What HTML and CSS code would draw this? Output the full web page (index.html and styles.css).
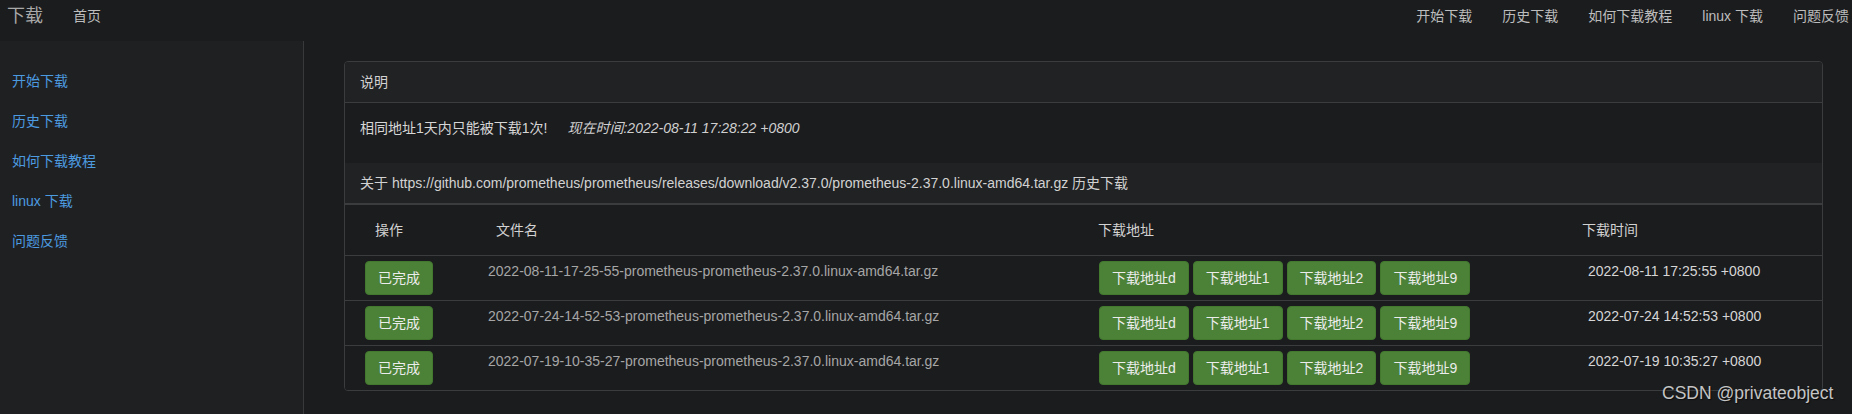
FILE: index.html
```html
<!DOCTYPE html>
<html lang="zh-CN">

<head>
    <meta charset="UTF-8">
    <meta name="viewport" content="width=device-width, initial-scale=1.0">
    <title>下载</title>
    <link rel="stylesheet" href="styles.css">
</head>

<body>
    <nav class="navbar">
        <a class="brand" href="#">下载</a>
        <a class="nav-link home" href="#">首页</a>
        <div class="nav-right">
            <a class="nav-link" href="#">开始下载</a>
            <a class="nav-link" href="#">历史下载</a>
            <a class="nav-link" href="#">如何下载教程</a>
            <a class="nav-link" href="#">linux 下载</a>
            <a class="nav-link" href="#">问题反馈</a>
        </div>
    </nav>

    <div class="layout">
        <aside class="sidebar">
            <a href="#">开始下载</a>
            <a href="#">历史下载</a>
            <a href="#">如何下载教程</a>
            <a href="#">linux 下载</a>
            <a href="#">问题反馈</a>
        </aside>

        <main class="main">
            <div class="panel">
                <div class="panel-heading">说明</div>
                <div class="panel-body">
                    <p>相同地址1天内只能被下载1次!<em class="now">现在时间:2022-08-11 17:28:22 +0800</em></p>
                </div>
                <div class="panel-sub">关于 https://github.com/prometheus/prometheus/releases/download/v2.37.0/prometheus-2.37.0.linux-amd64.tar.gz 历史下载</div>

                <table class="history">
                    <colgroup>
                        <col class="col-op">
                        <col class="col-name">
                        <col class="col-links">
                        <col class="col-time">
                    </colgroup>
                    <thead>
                        <tr>
                            <th class="c1">操作</th>
                            <th class="c2">文件名</th>
                            <th class="c3">下载地址</th>
                            <th class="c4">下载时间</th>
                        </tr>
                    </thead>
                    <tbody>
                        <tr>
                            <td class="c1"><button class="btn">已完成</button></td>
                            <td class="c2 filename">2022-08-11-17-25-55-prometheus-prometheus-2.37.0.linux-amd64.tar.gz</td>
                            <td class="c3">
                                <div class="links">
                                    <button class="btn">下载地址d</button>
                                    <button class="btn">下载地址1</button>
                                    <button class="btn">下载地址2</button>
                                    <button class="btn">下载地址9</button>
                                </div>
                            </td>
                            <td class="c4 time">2022-08-11 17:25:55 +0800</td>
                        </tr>
                        <tr>
                            <td class="c1"><button class="btn">已完成</button></td>
                            <td class="c2 filename">2022-07-24-14-52-53-prometheus-prometheus-2.37.0.linux-amd64.tar.gz</td>
                            <td class="c3">
                                <div class="links">
                                    <button class="btn">下载地址d</button>
                                    <button class="btn">下载地址1</button>
                                    <button class="btn">下载地址2</button>
                                    <button class="btn">下载地址9</button>
                                </div>
                            </td>
                            <td class="c4 time">2022-07-24 14:52:53 +0800</td>
                        </tr>
                        <tr>
                            <td class="c1"><button class="btn">已完成</button></td>
                            <td class="c2 filename">2022-07-19-10-35-27-prometheus-prometheus-2.37.0.linux-amd64.tar.gz</td>
                            <td class="c3">
                                <div class="links">
                                    <button class="btn">下载地址d</button>
                                    <button class="btn">下载地址1</button>
                                    <button class="btn">下载地址2</button>
                                    <button class="btn">下载地址9</button>
                                </div>
                            </td>
                            <td class="c4 time">2022-07-19 10:35:27 +0800</td>
                        </tr>
                    </tbody>
                </table>
            </div>
        </main>
    </div>

    <div class="watermark">CSDN @privateobject</div>
</body>

</html>
```

FILE: styles.css
```css
* {
    box-sizing: border-box;
    margin: 0;
    padding: 0;
}

body {
    font-family: 'Liberation Sans', 'Noto Sans CJK SC', sans-serif;
    font-size: 14px;
    line-height: 20px;
    background-color: #1b1c1e;
    color: #cfcfcf;
    min-height: 100vh;
    display: flex;
    flex-direction: column;
}

a {
    text-decoration: none;
}

.navbar {
    display: flex;
    align-items: flex-start;
    height: 41px;
    padding: 6px 3px 0 7px;
    background-color: #1b1c1e;
}

.brand {
    font-size: 18px;
    line-height: 20px;
    color: #a9a9a9;
}

.nav-link {
    color: #bdbdbd;
    line-height: 20px;
}

.home {
    margin-left: 30px;
}

.nav-right {
    margin-left: auto;
    display: flex;
    gap: 30px;
}

.layout {
    flex: 1;
    display: flex;
}

.sidebar {
    width: 304px;
    flex-shrink: 0;
    background-color: #1f2022;
    border-right: 1px solid #38393b;
    padding: 20px 12px;
    display: flex;
    flex-direction: column;
}

.sidebar a {
    color: #4c9be0;
    padding: 10px 0;
}

.main {
    flex: 1;
    padding: 20px 29px 20px 40px;
}

.panel {
    border: 1px solid #3b3c3e;
    border-radius: 4px;
    overflow: hidden;
}

.panel-heading {
    padding: 10px 15px;
    background-color: #212224;
    border-bottom: 1px solid #3b3c3e;
    color: #d2d2d2;
}

.panel-body {
    padding: 15px 15px;
    background-color: #1b1c1e;
}

.panel-body p {
    margin-bottom: 10px;
    color: #d6d6d6;
}

.now {
    margin-left: 20px;
    color: #cfcfcf;
}

.panel-sub {
    padding: 10px 15px;
    background-color: #212224;
    border-bottom: 2px solid #3b3c3e;
    color: #d2d2d2;
}

.history {
    width: 100%;
    table-layout: fixed;
    border-collapse: collapse;
    background-color: #1b1c1e;
}

.col-op {
    width: 135px;
}

.col-name {
    width: 610px;
}

.col-links {
    width: 484px;
}

.history th {
    text-align: left;
    font-weight: normal;
    color: #d2d2d2;
    padding-top: 15px;
    padding-bottom: 15px;
    border-bottom: 1px solid #3b3c3e;
}

.history td {
    vertical-align: top;
    padding-top: 5px;
    padding-bottom: 5px;
}

.history tbody tr + tr td {
    border-top: 1px solid #3b3c3e;
}

th.c1 {
    padding-left: 30px;
}

th.c2 {
    padding-left: 16px;
}

th.c3,
th.c4 {
    padding-left: 8px;
}

td.c1 {
    padding-left: 20px;
}

td.c2 {
    padding-left: 8px;
}

td.c3 {
    padding-left: 9px;
}

td.c4 {
    padding-left: 14px;
}

.filename {
    color: #a6a6a6;
    white-space: nowrap;
}

.time {
    color: #d6d6d6;
}

.links {
    display: flex;
    gap: 4px;
}

.btn {
    font-family: inherit;
    font-size: 14px;
    line-height: 20px;
    padding: 6px 12px;
    border: 1px solid #43782f;
    border-radius: 4px;
    background-color: #4b8237;
    color: #ececec;
    cursor: pointer;
}

.btn:hover {
    background-color: #3f6f2e;
}

.watermark {
    position: absolute;
    left: 1662px;
    top: 382px;
    font-size: 17.5px;
    line-height: 22px;
    color: #c4c4c4;
    text-shadow: 1px 1px 1px rgba(0, 0, 0, 0.6);
    pointer-events: none;
}
```
